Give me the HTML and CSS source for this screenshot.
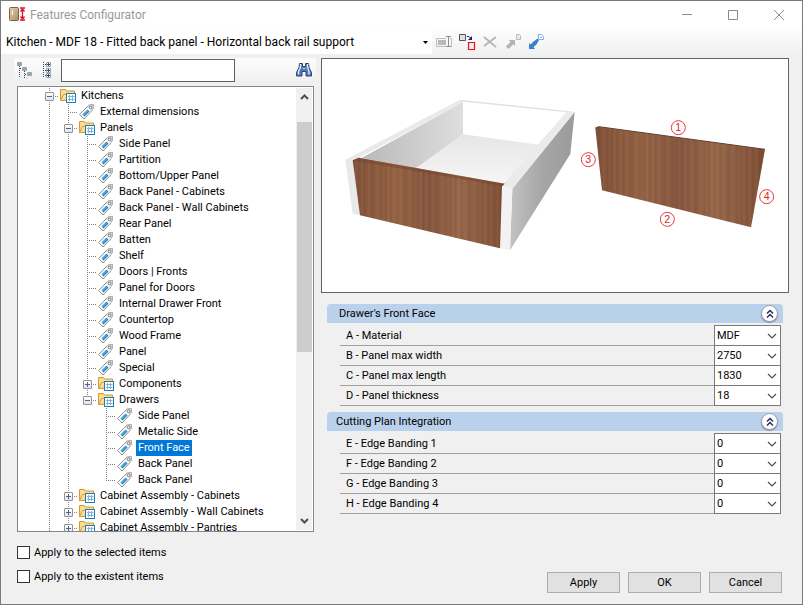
FILE: index.html
```html
<!DOCTYPE html>
<html lang="en">
<head>
  <meta charset="UTF-8" />
  <meta name="viewport" content="width=device-width, initial-scale=1" />
  <title>Features Configurator</title>
  <link rel="stylesheet" href="styles.css">
</head>
<body>
  <!-- Shared icons -->
  <svg class="defs" width="0" height="0" aria-hidden="true">
    <defs>
      <linearGradient id="folderFill" x1="0" y1="0" x2="1" y2="1">
        <stop offset="0" stop-color="#fff0b8" />
        <stop offset="1" stop-color="#f3bf58" />
      </linearGradient>
      <symbol id="folder" viewBox="0 0 18 16">
        <path d="M1.500 12.500V1.500h5l1 1.500h8v2.500" fill="#fbdc8e" stroke="#d9952f" />
        <path d="M1.500 12.500l3-6h12v6z" fill="url(#folderFill)" stroke="#dc9a35" />
        <rect x="7.500" y="5.500" width="9" height="9" fill="#fff" stroke="#1580b8" />
        <path d="M10.500 7v6M13.500 7v6M9 8.500h6.500M9 11.500h6.500" stroke="#85b0dc" fill="none" />
      </symbol>
      <symbol id="tag" viewBox="0 0 18 16">
        <path d="M1.500 10.500L10 2l2-1.500h3.500V4L14 6.500 6 15z" fill="#fafafa" stroke="#909090" />
        <path d="M10 2l2-1.500h3.500V4L14 6.500z" fill="#cfcfcf" />
        <path d="M4.500 10.500l5-5 2 2-5 5z" fill="#1f86c8" />
        <path d="M5.500 11l5-5" stroke="#6fc0ee" fill="none" />
        <circle cx="12.500" cy="3.500" r="1.300" fill="#fff" stroke="#777" />
      </symbol>
      <symbol id="chevron" viewBox="0 0 10 6">
        <path d="M1 1l4 4 4-4" fill="none" stroke="#505050" stroke-width="1.200" />
      </symbol>
    </defs>
  </svg>

  <div class="window">
    <header class="titlebar">
      <svg class="app-icon" width="18" height="16" viewBox="0 0 18 16">
        <defs>
          <linearGradient id="door" x1="0" y1="0" x2="1" y2="1">
            <stop offset="0" stop-color="#e5d3b4" />
            <stop offset="1" stop-color="#ad8b60" />
          </linearGradient>
        </defs>
        <rect x=".5" y=".5" width="9" height="13" rx="1" fill="url(#door)" stroke="#7c6142" />
        <path d="M3.500 4v4" stroke="#fff" />
        <path d="M11 1h5M11 13h5M13.500 1v12M11.500 4.500l2-2.500 2 2.500M11.500 9.500l2 2.500 2-2.500" fill="none" stroke="#e0102a" stroke-width="1.300" />
      </svg>
      <h1>Features Configurator</h1>
      <button class="win-btn" aria-label="Minimize"><svg width="10" height="10"><path d="M0 4.500h10" /></svg></button>
      <button class="win-btn" aria-label="Maximize"><svg width="10" height="10"><path d="M.5.5h9v9h-9z" /></svg></button>
      <button class="win-btn" aria-label="Close"><svg width="10" height="10"><path d="M0 0l10 10M10 0L0 10" /></svg></button>
    </header>

    <div class="toolbar">
      <div class="config-select">
        <select aria-label="Configuration">
          <option>Kitchen - MDF 18 - Fitted back panel - Horizontal back rail support</option>
        </select>
        <svg width="5" height="3"><path d="M0 0h5L2.500 3z" /></svg>
      </div>
      <button class="tool" aria-label="Rename">
        <svg width="17" height="16"><path d="M10 4.500H.5v8H10M14 4.500h1.500v8H14" fill="none" stroke="#bdbdbd" /><path d="M2 6h8v5H2z" fill="#b9b9b9" /><path d="M10 2.500h5M10 12.500h5M12.500 3v9" fill="none" stroke="#8d8d8d" /></svg>
      </button>
      <button class="tool" aria-label="Duplicate">
        <svg width="17" height="16"><path d="M.5.500h6v6h-6z" fill="#e0e0ea" stroke="#5e5058" /><path d="M8 2.500h2l2 2" fill="none" stroke="#0c2484" /><path d="M13 2v4H9z" fill="#0c2484" /><path d="M9.500 8.500h6v7h-6z" fill="#ececf0" stroke="#f01010" stroke-width="1.200" /></svg>
      </button>
      <button class="tool" aria-label="Delete">
        <svg width="17" height="16"><path d="M2 3l12 10M14 3L2 12" fill="none" stroke="#b6b6b6" stroke-width="2" /></svg>
      </button>
      <button class="tool" aria-label="Export">
        <svg width="17" height="16"><path d="M1 12.500l4.500-4.500L4 6h6v6L8 10.500 3.500 15z" fill="#b3b3b3" /><path d="M11.500.500h3l1 1v4h-4z" fill="#e8e8e8" stroke="#bbb" /></svg>
      </button>
      <button class="tool" aria-label="Import">
        <svg width="17" height="16"><path d="M1 15V9l1.500 1.500 3-3L9.500 4.500 11 6 8.500 10.500l-3 2.500L7 15z" fill="#3c80cd" /><path d="M10.500.500h3l2 2v3h-5z" fill="#fff" stroke="#7fb0e4" /><path d="M12 3.500h2" stroke="#7fb0e4" /></svg>
      </button>
    </div>

    <main class="content">
      <section class="sidebar">
        <div class="search">
          <button class="tool" aria-label="Collapse all">
            <svg width="16" height="16"><path d="M2.500 4v12M7.500 9v7M3 6.500h3M8 12.500h3" fill="none" stroke="#444" stroke-dasharray="1 1" /><path d="M.5.500h4v3h-4zM5.500 5.500h4v3h-4zM10.500 10.500h4v3h-4z" fill="#fff" stroke="#8fa6b4" /><path d="M1 2h3M6 7h3M11 12h3" stroke="#445" /></svg>
          </button>
          <button class="tool" aria-label="Expand all">
            <svg width="16" height="16"><path d="M4.500 0v16M6 2.500h2M6 8.500h2M6 13.500h2" fill="none" stroke="#444" stroke-dasharray="1 1" /><path d="M7.500.500h4v4h-4zM7.500 6.500h4v4h-4zM7.500 11.500h4v4h-4z" fill="#fff" stroke="#8fa6b4" /><path d="M8 2.500h3M8 8.500h3M8 13.500h3M9.500 1v3M9.500 7v3M9.500 12v3" stroke="#445" /></svg>
          </button>
          <input type="text" aria-label="Search features" />
          <button class="tool find" aria-label="Find">
            <svg width="16" height="14"><path d="M3.500.500h3v3h3v-3h3l.5 4 2.500 5v3.500H10V8.500H6v4.500H.500V9.500l2.500-5z" fill="#5478b6" stroke="#27447f" /><path d="M4.500 1v3L2.500 8.500v3M11.500 1v3l1.500 4.500v3" fill="none" stroke="#dce8fa" stroke-width="1.400" /><path d="M6.500 5.500h3" stroke="#b3c8e8" /></svg>
          </button>
        </div>

        <div class="tree-box">
          <ul class="tree">
            <li class="more">
              <div class="row"><span class="branch"><button class="toggle" aria-label="Collapse"></button></span><svg><use href="#folder" /></svg><span class="label">Kitchens</span></div>
              <ul>
                <li><div class="row"><span class="branch"></span><svg><use href="#tag" /></svg><span class="label">External dimensions</span></div></li>
                <li>
                  <div class="row"><span class="branch"><button class="toggle" aria-label="Collapse"></button></span><svg><use href="#folder" /></svg><span class="label">Panels</span></div>
                  <ul>
                    <li><div class="row"><span class="branch"></span><svg><use href="#tag" /></svg><span class="label">Side Panel</span></div></li>
                    <li><div class="row"><span class="branch"></span><svg><use href="#tag" /></svg><span class="label">Partition</span></div></li>
                    <li><div class="row"><span class="branch"></span><svg><use href="#tag" /></svg><span class="label">Bottom/Upper Panel</span></div></li>
                    <li><div class="row"><span class="branch"></span><svg><use href="#tag" /></svg><span class="label">Back Panel - Cabinets</span></div></li>
                    <li><div class="row"><span class="branch"></span><svg><use href="#tag" /></svg><span class="label">Back Panel - Wall Cabinets</span></div></li>
                    <li><div class="row"><span class="branch"></span><svg><use href="#tag" /></svg><span class="label">Rear Panel</span></div></li>
                    <li><div class="row"><span class="branch"></span><svg><use href="#tag" /></svg><span class="label">Batten</span></div></li>
                    <li><div class="row"><span class="branch"></span><svg><use href="#tag" /></svg><span class="label">Shelf</span></div></li>
                    <li><div class="row"><span class="branch"></span><svg><use href="#tag" /></svg><span class="label">Doors | Fronts</span></div></li>
                    <li><div class="row"><span class="branch"></span><svg><use href="#tag" /></svg><span class="label">Panel for Doors</span></div></li>
                    <li><div class="row"><span class="branch"></span><svg><use href="#tag" /></svg><span class="label">Internal Drawer Front</span></div></li>
                    <li><div class="row"><span class="branch"></span><svg><use href="#tag" /></svg><span class="label">Countertop</span></div></li>
                    <li><div class="row"><span class="branch"></span><svg><use href="#tag" /></svg><span class="label">Wood Frame</span></div></li>
                    <li><div class="row"><span class="branch"></span><svg><use href="#tag" /></svg><span class="label">Panel</span></div></li>
                    <li><div class="row"><span class="branch"></span><svg><use href="#tag" /></svg><span class="label">Special</span></div></li>
                    <li><div class="row"><span class="branch"><button class="toggle closed" aria-label="Expand"></button></span><svg><use href="#folder" /></svg><span class="label">Components</span></div></li>
                    <li>
                      <div class="row"><span class="branch"><button class="toggle" aria-label="Collapse"></button></span><svg><use href="#folder" /></svg><span class="label">Drawers</span></div>
                      <ul>
                        <li><div class="row"><span class="branch"></span><svg><use href="#tag" /></svg><span class="label">Side Panel</span></div></li>
                        <li><div class="row"><span class="branch"></span><svg><use href="#tag" /></svg><span class="label">Metalic Side</span></div></li>
                        <li><div class="row"><span class="branch"></span><svg><use href="#tag" /></svg><span class="label selected">Front Face</span></div></li>
                        <li><div class="row"><span class="branch"></span><svg><use href="#tag" /></svg><span class="label">Back Panel</span></div></li>
                        <li><div class="row"><span class="branch"></span><svg><use href="#tag" /></svg><span class="label">Back Panel</span></div></li>
                      </ul>
                    </li>
                  </ul>
                </li>
                <li><div class="row"><span class="branch"><button class="toggle closed" aria-label="Expand"></button></span><svg><use href="#folder" /></svg><span class="label">Cabinet Assembly - Cabinets</span></div></li>
                <li><div class="row"><span class="branch"><button class="toggle closed" aria-label="Expand"></button></span><svg><use href="#folder" /></svg><span class="label">Cabinet Assembly - Wall Cabinets</span></div></li>
                <li class="more"><div class="row"><span class="branch"><button class="toggle closed" aria-label="Expand"></button></span><svg><use href="#folder" /></svg><span class="label">Cabinet Assembly - Pantries</span></div></li>
              </ul>
            </li>
          </ul>
          <div class="scrollbar">
            <svg width="9" height="6"><path d="M1 5l3.500-3.500L8 5" /></svg>
            <div class="track"><div class="thumb"></div></div>
            <svg width="9" height="6"><path d="M1 1l3.500 3.500L8 1" /></svg>
          </div>
        </div>

        <label class="check"><input type="checkbox" /> Apply to the selected items</label>
        <label class="check"><input type="checkbox" /> Apply to the existent items</label>
      </section>

      <section class="details">
        <div class="preview">
          <svg viewBox="6 27 1398 699" role="img" aria-label="Drawer front face">
            <defs>
              <linearGradient id="wood" x1="0" x2="1">
                <stop offset="0" stop-color="#7f5039" />
                <stop offset=".12" stop-color="#8a593e" />
                <stop offset=".3" stop-color="#946345" />
                <stop offset=".5" stop-color="#875640" />
                <stop offset=".7" stop-color="#96674a" />
                <stop offset=".88" stop-color="#895a40" />
                <stop offset="1" stop-color="#7b4c35" />
              </linearGradient>
              <pattern id="grain" width="97" height="800" patternUnits="userSpaceOnUse">
                <path d="M4 0v800M19 0v800M37 0v800M58 0v800M63 0v800M86 0v800" stroke="#64391f" stroke-opacity=".22" stroke-width="3" />
                <path d="M11 0v800M29 0v800M48 0v800M75 0v800" stroke="#b98360" stroke-opacity=".22" stroke-width="3" />
              </pattern>
              <linearGradient id="innerSide" x1="0" x2="1">
                <stop offset="0" stop-color="#b9b9b9" />
                <stop offset="1" stop-color="#dedede" />
              </linearGradient>
              <linearGradient id="outerSide" x1="0" x2="1">
                <stop offset="0" stop-color="#c2c2c2" />
                <stop offset=".5" stop-color="#a6a6a6" />
                <stop offset="1" stop-color="#9b9b9b" />
              </linearGradient>
              <linearGradient id="bottom" x1="0" y1="1" x2="0" y2="0">
                <stop offset="0" stop-color="#f6f6f6" />
                <stop offset="1" stop-color="#e6e6e6" />
              </linearGradient>
            </defs>
            <path d="M429 253L656 284 552 402 288 352z" fill="url(#bottom)" />
            <path d="M429 156V253L288 354 125 324z" fill="url(#innerSide)" />
            <path d="M76 329L420 149 431 155 120 322 98 331 120 496 98 491z" fill="#e9e9e9" />
            <path d="M420 149L764 185 740 187 431 155z" fill="#e2e2e2" />
            <path d="M764 185L751 312 570 601 577 416z" fill="url(#outerSide)" />
            <path d="M740 185L764 187 577 416 546 410 552 400z" fill="#ebebeb" />
            <path d="M546 410L577 416 570 601 540 595z" fill="#f2f2f2" />
            <path d="M98 331L116 323 554 401 546 409 540 595 120 496z" fill="url(#wood)" />
            <path d="M98 331L116 323 554 401 546 409 540 595 120 496z" fill="url(#grain)" />
            <path d="M98 331L116 323 554 401 546 409z" fill="#6f432c" fill-opacity=".45" />
            <path d="M826 234L836 230 1335 298 1293 532 846 421z" fill="url(#wood)" />
            <path d="M826 234L836 230 1335 298 1293 532 846 421z" fill="url(#grain)" />
            <path d="M826 234L836 230 1335 298" fill="none" stroke="#63402e" stroke-width="3" />
            <g class="marks">
              <circle cx="1075" cy="233" r="21" /><text x="1075" y="244">1</text>
              <circle cx="1042" cy="508" r="21" /><text x="1042" y="519">2</text>
              <circle cx="805" cy="329" r="21" /><text x="805" y="340">3</text>
              <circle cx="1340" cy="440" r="21" /><text x="1340" y="451">4</text>
            </g>
          </svg>
        </div>

        <div class="group">
          <div class="group-head wide">
            <h2>Drawer's Front Face</h2>
            <button class="fold" aria-label="Collapse group"><svg width="10" height="10"><path d="M2 4.500l3-3 3 3M2 8.500l3-3 3 3" /></svg></button>
          </div>
          <div class="field">
            <label for="material">A - Material</label>
            <div class="combo"><select id="material"><option>MDF</option></select><svg><use href="#chevron" /></svg></div>
          </div>
          <div class="field">
            <label for="maxWidth">B - Panel max width</label>
            <div class="combo"><select id="maxWidth"><option>2750</option></select><svg><use href="#chevron" /></svg></div>
          </div>
          <div class="field">
            <label for="maxLength">C - Panel max length</label>
            <div class="combo"><select id="maxLength"><option>1830</option></select><svg><use href="#chevron" /></svg></div>
          </div>
          <div class="field">
            <label for="thickness">D - Panel thickness</label>
            <div class="combo"><select id="thickness"><option>18</option></select><svg><use href="#chevron" /></svg></div>
          </div>
        </div>

        <div class="group">
          <div class="group-head">
            <h2>Cutting Plan Integration</h2>
            <button class="fold" aria-label="Collapse group"><svg width="10" height="10"><path d="M2 4.500l3-3 3 3M2 8.500l3-3 3 3" /></svg></button>
          </div>
          <div class="field">
            <label for="edge1">E - Edge Banding 1</label>
            <div class="combo"><select id="edge1"><option>0</option></select><svg><use href="#chevron" /></svg></div>
          </div>
          <div class="field">
            <label for="edge2">F - Edge Banding 2</label>
            <div class="combo"><select id="edge2"><option>0</option></select><svg><use href="#chevron" /></svg></div>
          </div>
          <div class="field">
            <label for="edge3">G - Edge Banding 3</label>
            <div class="combo"><select id="edge3"><option>0</option></select><svg><use href="#chevron" /></svg></div>
          </div>
          <div class="field">
            <label for="edge4">H - Edge Banding 4</label>
            <div class="combo"><select id="edge4"><option>0</option></select><svg><use href="#chevron" /></svg></div>
          </div>
        </div>

        <div class="actions">
          <button>Apply</button>
          <button>OK</button>
          <button>Cancel</button>
        </div>
      </section>
    </main>
  </div>
</body>
</html>
```
FILE: styles.css
```css
* {
  box-sizing: border-box;
}

body {
  margin: 0;
  font-family: Roboto, 'Liberation Sans', sans-serif;
  font-size: 11px;
  color: #000;
}

button, input, select {
  font: inherit;
  color: inherit;
  margin: 0;
  padding: 0;
  border: none;
  border-radius: 0;
  background: none;
}

select {
  appearance: none;
}

svg {
  display: block;
  flex: none;
}

.defs {
  position: absolute;
}

.window {
  display: flex;
  flex-direction: column;
  height: 100vh;
  border: 1px solid #7a7a7a;
  background-color: #f0f0f0;
}

/* Title bar */
.titlebar {
  display: flex;
  align-items: center;
  height: 28px;
  padding-left: 8px;
  background-color: #fff;
}

.titlebar h1 {
  flex: 1;
  margin: 0 0 0 3px;
  font-size: 12px;
  font-weight: normal;
  color: #999;
}

.win-btn {
  display: flex;
  justify-content: center;
  align-items: center;
  width: 46px;
  height: 26px;
}

.win-btn path {
  fill: none;
  stroke: #8a8a8a;
}

/* Toolbar */
.toolbar {
  display: flex;
  align-items: center;
  gap: 6px;
  height: 26px;
  background: linear-gradient(#fdfdfd, #f0f0f0);
}

.config-select {
  display: grid;
  align-items: center;
  width: 431px;
  height: 24px;
  margin-right: -2px;
  background-color: #fff;
}

.config-select select, .config-select svg {
  grid-area: 1 / 1;
}

.config-select select {
  width: 100%;
  height: 24px;
  padding-left: 5px;
  font-size: 12px;
}

.config-select svg {
  justify-self: end;
  margin-right: 4px;
  pointer-events: none;
}

.tool {
  display: flex;
  justify-content: center;
  align-items: center;
}

/* Main area */
.content {
  flex: 1;
  display: grid;
  grid-template-columns: 302px 1fr;
  gap: 5px;
  min-height: 0;
  padding: 3px 13px 11px;
}

.sidebar {
  display: flex;
  flex-direction: column;
  min-height: 0;
  padding-bottom: 5px;
}

.search {
  display: flex;
  align-items: center;
  gap: 6px;
  height: 24px;
  padding: 0 4px 0 3px;
  border-radius: 3px;
  background: linear-gradient(#fdfdfd, #f0f0f0);
}

.search input {
  width: 174px;
  height: 23px;
  padding: 0 4px;
  border: 1px solid #5f5f5f;
  background-color: #fff;
}

.find {
  margin-left: auto;
}

/* Feature tree */
.tree-box {
  flex: 1;
  display: flex;
  min-height: 0;
  margin: 4px 2px 8px 3px;
  border: 1px solid #828790;
  background-color: #fff;
}

.tree, .tree ul {
  margin: 0;
  padding: 0;
  list-style: none;
}

.tree {
  flex: 1;
  overflow: hidden;
  padding: 1px 0 0 22px;
}

.tree ul {
  padding-left: 19px;
}

.tree li {
  background: repeating-linear-gradient(#808080 0 1px, transparent 1px 2px) 9px 0 / 1px 100% no-repeat;
}

.tree li:last-child:not(.more) {
  background-size: 1px 8px;
}

.row {
  display: flex;
  align-items: center;
  height: 16px;
}

.row svg {
  width: 18px;
  height: 16px;
  margin-right: 2px;
}

.branch {
  display: flex;
  align-items: center;
  width: 19px;
  height: 16px;
  padding-left: 5px;
  background: repeating-linear-gradient(to right, #808080 0 1px, transparent 1px 2px) 9px 8px / 10px 1px no-repeat;
}

.toggle {
  width: 9px;
  height: 9px;
  border: 1px solid #919191;
  border-radius: 1px;
  background:
    linear-gradient(#4b63a7, #4b63a7) center / 5px 1px no-repeat,
    linear-gradient(#fff, #e4e4e4);
}

.toggle.closed {
  background:
    linear-gradient(#4b63a7, #4b63a7) center / 5px 1px no-repeat,
    linear-gradient(#4b63a7, #4b63a7) center / 1px 5px no-repeat,
    linear-gradient(#fff, #e4e4e4);
}

.label {
  padding: 0 2px;
  line-height: 16px;
  white-space: nowrap;
}

.label.selected {
  background-color: #0078d7;
  color: #fff;
}

.scrollbar {
  display: flex;
  flex-direction: column;
  align-items: center;
  width: 16px;
  margin: 1px 1px 1px 0;
  padding: 6px 0;
  background-color: #f0f0f0;
}

.scrollbar path {
  fill: none;
  stroke: #505050;
  stroke-width: 2;
}

.track {
  flex: 1;
  width: 15px;
  padding: 22px 0 12px;
}

.thumb {
  height: 60%;
  background-color: #cdcdcd;
}

.check {
  display: flex;
  align-items: center;
  gap: 4px;
  height: 24px;
  padding-left: 3px;
}

.check input {
  appearance: none;
  width: 13px;
  height: 13px;
  border: 1px solid #333;
  background-color: #fff;
}

/* Right side */
.details {
  display: flex;
  flex-direction: column;
}

.preview {
  margin-bottom: 11px;
  border: 1px solid #646464;
  background-color: #fff;
}

.preview svg {
  width: 100%;
}

.marks circle {
  fill: none;
  stroke: #e23b3b;
  stroke-width: 3;
}

.marks text {
  fill: #e02525;
  font-family: 'Liberation Sans', Arial, sans-serif;
  font-size: 32px;
  text-anchor: middle;
}

.group {
  margin: 0 6px 6px;
}

.group-head {
  display: flex;
  align-items: center;
  justify-content: space-between;
  height: 19px;
  margin-bottom: 3px;
  padding: 0 5px 0 9px;
  border-radius: 4px 4px 0 0;
  background-color: #b9d1ea;
}

.group-head.wide {
  padding-left: 12px;
}

.group-head h2 {
  margin: 0;
  font-size: 11px;
  font-weight: normal;
}

.fold {
  display: flex;
  justify-content: center;
  align-items: center;
  width: 17px;
  height: 17px;
  border: 1px solid #9a9db0;
  border-radius: 50%;
  background-color: #fff;
  box-shadow: 0 1px 1px #8c8ca0;
}

.fold path {
  fill: none;
  stroke: #1f2f66;
  stroke-width: 1.5;
}

.field {
  display: flex;
  align-items: center;
  justify-content: space-between;
  height: 20px;
  margin: 0 2px 0 13px;
  padding-left: 6px;
  border-bottom: 1px solid #a0a0a0;
}

.combo {
  display: grid;
  align-items: center;
  width: 67px;
  height: 21px;
  margin: -1px 0;
  border: 1px solid #7a7a7a;
  background-color: #fff;
}

.combo select, .combo svg {
  grid-area: 1 / 1;
}

.combo select {
  width: 100%;
  height: 19px;
  padding: 0 0 1px 2px;
}

.combo svg {
  justify-self: end;
  width: 10px;
  height: 6px;
  margin-right: 3px;
  pointer-events: none;
}

.actions {
  display: flex;
  justify-content: flex-end;
  gap: 8px;
  margin-top: auto;
  padding-right: 7px;
}

.actions button {
  width: 73px;
  height: 21px;
  border: 1px solid #adadad;
  background-color: #e1e1e1;
}
```
